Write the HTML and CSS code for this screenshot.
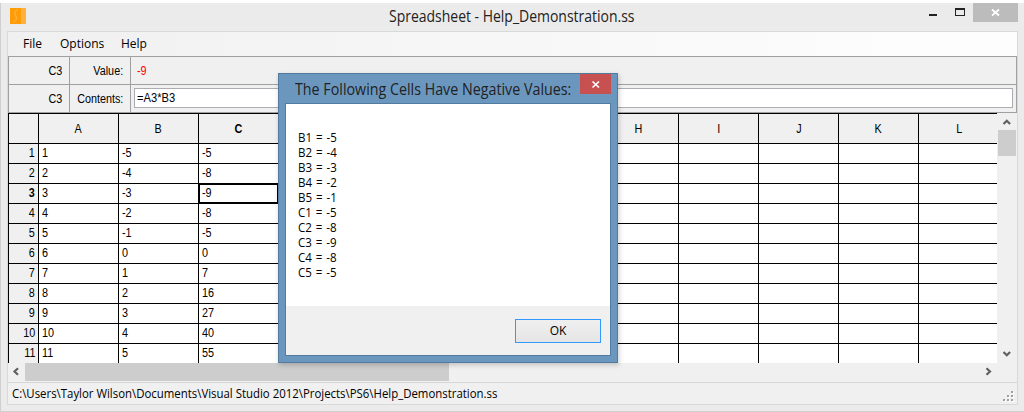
FILE: index.html
```
<!DOCTYPE html>
<html lang="en">
<head>
<meta charset="utf-8">
<title>Spreadsheet - Help_Demonstration.ss</title>
<link rel="stylesheet" href="styles.css">
</head>
<body>
<div class="window">
  <header class="titlebar">
    <svg class="app-icon" width="16" height="16" viewBox="0 0 16 16"><path fill="#ff9c08" d="M0 0h16v16H0z"/><path fill="#ffb13b" d="M11 0h5v16h-5z"/><path d="M8 2C5 2 4 5 5.500 7.500S7 13 3 14" fill="none" stroke="#ffc45e" stroke-width=".8"/></svg>
    <h1 class="title"><span class="fit title-text">Spreadsheet - Help_Demonstration.ss</span></h1>
    <div class="controls">
      <svg width="91" height="19" viewBox="0 0 91 19"><path fill="#bcbcbc" d="M46 0h45v19H46z"/><path fill="#222" d="M2 11h8v2H2z"/><path fill="#222" fill-rule="evenodd" d="M28 5h10v8H28zM29 7h8v5h-8z"/><path d="M65 6.500l7 6M72 6.500l-7 6" stroke="#fff" stroke-width="1.700"/></svg>
    </div>
  </header>
  <main class="client">
    <nav class="menu"><span>File</span><span>Options</span><span>Help</span></nav>
    <div class="info">
      <div class="info-row"><span class="ref"><b>C3</b></span><span class="label"><b>Value:</b></span><span class="value"><b>-9</b></span></div>
      <div class="info-row"><span class="ref"><b>C3</b></span><span class="label"><b>Contents:</b></span><span class="field"><span class="input"><b>=A3*B3</b></span></span></div>
    </div>
    <div class="sheet">
      <div class="grid" id="grid"></div>
      <div class="vscroll">
        <svg width="18" height="17" viewBox="0 0 18 17"><path d="M5.500 11l3.300-3.300L12.100 11" fill="none" stroke="#606060" stroke-width="2.200"/></svg>
        <div class="vthumb"></div>
        <svg width="18" height="17" viewBox="0 0 18 17"><path d="M5.500 6l3.300 3.300L12.100 6" fill="none" stroke="#606060" stroke-width="2.200"/></svg>
      </div>
    </div>
    <div class="hscroll">
      <svg width="17" height="18" viewBox="0 0 17 18"><path d="M10 5.200L6.500 8.500l3.500 3.300" fill="none" stroke="#606060" stroke-width="2.200"/></svg>
      <div class="hthumb"></div>
      <svg class="right-arrow" width="17" height="18" viewBox="0 0 17 18"><path d="M6.500 5.200l3.500 3.300-3.500 3.300" fill="none" stroke="#606060" stroke-width="2.200"/></svg>
    </div>
    <footer class="status"><span class="fit path-text">C:\Users\Taylor Wilson\Documents\Visual Studio 2012\Projects\PS6\Help_Demonstration.ss</span>
      <svg class="grip" width="11" height="11" viewBox="0 0 11 11"><path fill="#fff" d="M9 1h2v2H9zM5 5h2v2H5zM9 5h2v2H9zM1 9h2v2H1zM5 9h2v2H5zM9 9h2v2H9z"/><path fill="#a0a0a0" d="M8 0h2v2H8zM4 4h2v2H4zM8 4h2v2H8zM0 8h2v2H0zM4 8h2v2H4zM8 8h2v2H8z"/></svg>
    </footer>
  </main>
</div>
<section class="dialog">
  <header class="dialog-bar">
    <h2 class="dialog-title"><span class="fit dialog-text">The Following Cells Have Negative Values:</span></h2>
    <svg class="dialog-close" width="31" height="20" viewBox="0 0 31 20"><path fill="#c75050" d="M0 0h31v20H0z"/><path d="M12.500 7.500l6.500 6M19 7.500l-6.500 6" stroke="#fff" stroke-width="1.700"/></svg>
  </header>
  <div class="dialog-client">
    <div class="message">
      <p class="lines">B1 = -5<br>B2 = -4<br>B3 = -3<br>B4 = -2<br>B5 = -1<br>C1 = -5<br>C2 = -8<br>C3 = -9<br>C4 = -8<br>C5 = -5</p>
    </div>
    <div class="actions"><button class="ok">OK</button></div>
  </div>
</section>
<script src="grid.js"></script>
</body>
</html>
```
FILE: styles.css
```
* { box-sizing: border-box; }
body { margin: 0; padding-top: 3px; height: 412px; overflow: hidden; background: #fff; color: #000; font: 12px "Open Sans", sans-serif; }
b { font-weight: inherit; display: inline-block; }
.fit { display: inline-block; white-space: pre; }
.window { height: 409px; border: 1px solid #cfcfcf; border-width: 0 0 1px 1px; background: #ebebeb; padding: 0 6px; display: flex; flex-direction: column; }
.titlebar { height: 28px; display: flex; align-items: flex-start; justify-content: space-between; padding-left: 3px; }
.app-icon { margin-top: 5px; }
.title { margin: 0; font-size: 16px; line-height: 27px; font-weight: 400; color: #222; width: 247px; margin-left: 363px; margin-right: auto; }
.title-text { transform-origin: left; transform: scaleX(.873); }
.controls { height: 19px; flex: none; }
.client { width: 1011px; height: 374px; border: 1px solid #d9d9d9; background: #f0f0f0; display: flex; flex-direction: column; }
.menu { height: 24px; flex: none; background: linear-gradient(90deg, #f0f0f0 0, #fdfdfd 92%); display: flex; padding-left: 15px; line-height: 23px; }
.menu span { width: 61px; }
.menu span:first-child { width: 37px; }
.info { border: 1px solid #a0a0a0; border-width: 1px 1px 0; flex: none; width: 1009px; }
.info-row { height: 28px; border-bottom: 1px solid #a0a0a0; display: flex; line-height: 28px; }
.info-row b, .cell b { font-family: "Liberation Sans", sans-serif; }
.ref, .label { border-right: 1px solid #a0a0a0; width: 61px; text-align: right; padding-right: 7px; }
.ref b, .label b, .num b { transform: scaleX(.9); transform-origin: right; }
.value b, .input b, .data b { transform: scaleX(.9); transform-origin: left; }
.value { color: #f00; padding-left: 6px; }
.field { flex: 1; padding: 3px; }
.input { display: block; height: 20px; border: 1px solid #abadb3; background: #fff; padding-left: 2px; line-height: 18px; }
.input b { transform: scaleX(.93); }
.sheet { display: flex; height: 250px; flex: none; }
.grid { width: 989px; overflow: hidden; background: #fff; border-top: 1px solid #000; border-left: 1px solid #000; display: grid; grid-template-columns: 30px repeat(12, 80px); grid-template-rows: 30px repeat(11, 20px); }
.cell { border-right: 1px solid #000; border-bottom: 1px solid #000; line-height: 18px; padding-left: 3px; overflow: hidden; }
.cell.last { border-right: 0; }
.head { background: #f0f0f0; text-align: center; line-height: 29px; padding: 0; }
.head b { transform: scaleX(.9); }
.num { background: #f0f0f0; text-align: right; padding: 0 3px 0 0; }
.bold { font-weight: 700; }
.selected { box-shadow: inset 1px 1px #000, inset -1px -1px #000; }
.vscroll { margin-left: 1px; width: 18px; display: flex; flex-direction: column; }
.vthumb { height: 26px; background: #cdcdcd; margin-bottom: auto; }
.hscroll { height: 19px; flex: none; display: flex; width: 989px; }
.hthumb { width: 424px; height: 18px; background: #cdcdcd; }
.right-arrow { margin-left: auto; }
.status { flex: 1; border-top: 1px solid #d7d7d7; padding: 0 3px 0 4px; display: flex; justify-content: space-between; line-height: 22px; }
.path-text { transform-origin: left; transform: scaleX(.95); }
.grip { margin-top: 8px; }
.dialog { position: absolute; left: 278px; top: 73px; width: 340px; height: 290px; background: #6b97bf; border: 1px solid #527b9f; box-shadow: 1px 2px 5px #0003; padding: 0 6px 6px; display: flex; flex-direction: column; }
.dialog-bar { height: 29px; display: flex; justify-content: space-between; padding-left: 10px; flex: none; }
.dialog-title { margin: 0; font-size: 16px; line-height: 30px; font-weight: 400; color: #222; width: 280px; }
.dialog-text { transform-origin: left; transform: scaleX(.892); }
.dialog-close { flex: none; }
.dialog-client { flex: 1; border: 1px solid #527b9f; display: flex; flex-direction: column; }
.message { height: 202px; background: #fff; padding: 26px 12px 0; line-height: 15px; }
.lines { margin: 0; word-spacing: 1px; transform: scaleX(.96); transform-origin: left; }
.actions { flex: 1; background: #f0f0f0; padding: 13px 9px 0 0; display: flex; justify-content: flex-end; }
.ok { width: 86px; height: 24px; border: 1px solid #3399ff; background: linear-gradient(#f0f0f0, #e5e5e5); font: 12px "Open Sans", sans-serif; color: #000; padding: 0 0 1px; }
```
FILE: grid.js
```
const columns = 'ABCDEFGHIJKL'.split('');
const rows = [[1,-5,-5],[2,-4,-8],[3,-3,-9],[4,-2,-8],[5,-1,-5],[6,0,0],[7,1,7],[8,2,16],[9,3,27],[10,4,40],[11,5,55]];
const cell = (cls, text) => `<div class="cell ${cls}">${text === undefined ? '' : `<b>${text}</b>`}</div>`;
let html = cell('head');
columns.forEach((name, i) => { html += cell('head' + (i === 2 ? ' bold' : '') + (i === 11 ? ' last' : ''), name); });
rows.forEach((values, r) => {
  html += cell('num' + (r === 2 ? ' bold' : ''), r + 1);
  columns.forEach((_, c) => { html += cell('data' + (r === 2 && c === 2 ? ' selected' : '') + (c === 11 ? ' last' : ''), values[c]); });
});
document.getElementById('grid').innerHTML = html;
```
